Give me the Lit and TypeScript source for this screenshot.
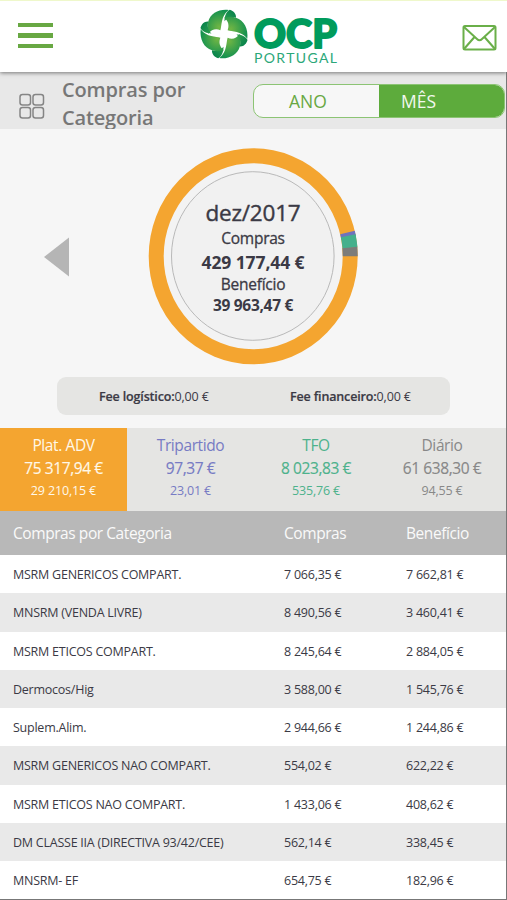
import { LitElement, html, css, svg } from "lit";
import { customElement } from "lit/decorators.js";

type Row = [string, string, string];

const ROWS: Row[] = [
  ["MSRM GENERICOS COMPART.", "7 066,35 €", "7 662,81 €"],
  ["MNSRM (VENDA LIVRE)", "8 490,56 €", "3 460,41 €"],
  ["MSRM ETICOS COMPART.", "8 245,64 €", "2 884,05 €"],
  ["Dermocos/Hig", "3 588,00 €", "1 545,76 €"],
  ["Suplem.Alim.", "2 944,66 €", "1 244,86 €"],
  ["MSRM GENERICOS NAO COMPART.", "554,02 €", "622,22 €"],
  ["MSRM ETICOS NAO COMPART.", "1 433,06 €", "408,62 €"],
  ["DM CLASSE IIA (DIRECTIVA 93/42/CEE)", "562,14 €", "338,45 €"],
  ["MNSRM- EF", "654,75 €", "182,96 €"],
];

const TABS = [
  { name: "Plat. ADV", total: "75 317,94 €", benefit: "29 210,15 €", cls: "adv" },
  { name: "Tripartido", total: "97,37 €", benefit: "23,01 €", cls: "tri" },
  { name: "TFO", total: "8 023,83 €", benefit: "535,76 €", cls: "tfo" },
  { name: "Diário", total: "61 638,30 €", benefit: "94,55 €", cls: "dia" },
];

const petal = (angle: number) => svg`
  <g transform="rotate(${angle})">
    <path d="M.5 -13C.5 -18 2.500 -23 6 -24.500C10 -23.500 13 -20 12.500 -16.500C8 -17.500 4 -17 .5 -13Z" fill="url(#dark)" />
    <path d="M-3.800 -3.800C-2.200 -8 -3.500 -18 4.800 -24.300C-5 -25.500 -14 -21 -16.500 -12.500C-17.600 -9 -17.600 -5 -16.300 0C-13 -5 -8 -5.500 -3.800 -3.800Z" fill="url(#leaf)" />
  </g>`;

@customElement("app-root")
export class AppRoot extends LitElement {
  static styles = css`
    :host { display: block; width: 507px; height: 900px; overflow: hidden; box-sizing: border-box;
      font-family: "Open Sans", "Noto Sans", sans-serif; background: #f6f6f6; color: #3b3a45; }
    * { box-sizing: border-box; }
    .screen { display: flex; flex-direction: column; height: 900px; }
    .top { height: 72px; flex: none; background: #fff; border-top: 1px solid #eff8cb; display: grid;
      grid-template-columns: 54px 1fr 44px; padding: 0 9px 0 18px; position: relative; box-shadow: 0 1px 4px #777; }
    .menu { display: flex; flex-direction: column; gap: 6px; padding-top: 22px; }
    .menu i { height: 4.4px; width: 35px; background: #68a843; }
    .brand { display: flex; padding-left: 127px; }
    .mark { width: 50px; height: 52px; margin-top: 7px; flex: none; }
    .word { width: 90px; height: 64px; margin: 7px 0 0 4px; flex: none; overflow: visible; }
    .mail { width: 36px; height: 28px; margin: 23px 0 0 8px; }
    .body { flex: 1; display: flex; flex-direction: column; border-right: 1px solid #777; border-bottom: 1px solid #777; }
    .bar { height: 57px; flex: none; background: #e8e8e8; display: flex; overflow: hidden; }
    .grid { width: 26px; height: 26px; margin: 21px 0 0 19px; flex: none; }
    h1 { margin: 4px 0 0 17px; font-size: 20px; line-height: 28px; font-weight: 600; color: #777; width: 191px; flex: none; letter-spacing: -.15px; }
    .toggle { margin-top: 12px; width: 252px; height: 34px; border: 1px solid #8cc474; border-radius: 10px; overflow: hidden;
      display: flex; flex: none; background: #f7f7f7; font-size: 17.5px; line-height: 33px; color: #68a843; }
    .ano { width: 125px; padding-left: 35px; }
    .mes { flex: 1; padding-left: 22px; background: #5dab3c; color: #f1f8ee; }
    .chart { height: 248px; flex: none; display: flex; }
    .prev { width: 26px; height: 40px; margin: 108px 0 0 44px; }
    .donut { width: 210px; height: 218px; margin: 18px 0 0 78px; display: grid; }
    .donut svg, .info { grid-area: 1 / 1; width: 210px; height: 218px; }
    .info { display: flex; flex-direction: column; align-items: center; padding-top: 51px; }
    .month { font-size: 22.5px; line-height: 30px; -webkit-text-stroke: .4px; letter-spacing: -.2px; }
    .label { font-size: 15.5px; line-height: 21.5px; -webkit-text-stroke: .3px; letter-spacing: -.25px; }
    .big { font-size: 17.5px; line-height: 24px; font-weight: 700; letter-spacing: -.1px; }
    .small { font-size: 15.5px; line-height: 20px; font-weight: 700; letter-spacing: -.3px; }
    .fees { width: 393px; height: 38px; margin-left: 57px; flex: none; border-radius: 9px; background: #e5e5e3;
      display: flex; font-size: 12.5px; line-height: 39px; letter-spacing: -.15px; }
    .fee { padding-left: 42px; width: 191px; white-space: nowrap; }
    .fee b { font-weight: 600; -webkit-text-stroke: .2px; }
    .tabs { height: 83px; margin-top: 13px; flex: none; display: grid; grid-template-columns: 127px 127px 124px 1fr; background: #e5e5e3; text-align: center; }
    .tab { padding-top: 6px; }
    .adv { background: #f4a530; color: #fff8e8; }
    .tri { color: #777bc4; }
    .tfo { color: #4db28c; }
    .dia { color: #888; }
    .name { font-size: 15.5px; line-height: 23px; letter-spacing: -.4px; }
    .total { font-size: 15.5px; line-height: 23px; letter-spacing: -.4px; -webkit-text-stroke: .15px; }
    .benefit { font-size: 12.5px; line-height: 21px; letter-spacing: -.15px; }
    .row { display: grid; grid-template-columns: 271px 122px 1fr; padding-left: 13px; height: 38.25px; line-height: 39px;
      font-size: 12.5px; letter-spacing: -.24px; background: #fff; flex: none; white-space: nowrap; }
    .row:nth-child(even) { background: #e9e9e9; }
    .head { height: 44px; background: #b8b8b8; color: #fafafa; font-size: 15.5px; line-height: 45px; letter-spacing: -.43px; }
  `;

  render() {
    return html`
      <div class="screen">
        <div class="top">
          <div class="menu"><i></i><i></i><i></i></div>
          <div class="brand">
            <svg class="mark" viewBox="-25 -26 50 52">
              <defs>
                <radialGradient id="leaf" gradientUnits="userSpaceOnUse" cx="-5" cy="-7" r="17">
                  <stop offset="0" stop-color="#72b644" /><stop offset="1" stop-color="#15924f" />
                </radialGradient>
                <linearGradient id="dark" x1="0" y1="1" x2="1" y2="0">
                  <stop offset="0" stop-color="#2f9f50" /><stop offset="1" stop-color="#007d4a" />
                </linearGradient>
              </defs>
              <g transform="scale(.96 .99)">${[0, 90, 180, 270].map(petal)}</g>
            </svg>
            <svg class="word" viewBox="0 0 90 64">
              <text x="1" y="40" textLength="83" lengthAdjust="spacingAndGlyphs" font-family="Lato" font-weight="900" font-size="39" fill="#009b5c" stroke="#009b5c" stroke-width="1.800" stroke-linejoin="round">OCP</text>
              <text x="1" y="55.300" textLength="83" font-family="Lato" font-size="14" fill="#2ba779">PORTUGAL</text>
            </svg>
          </div>
          <svg class="mail" viewBox="0 0 36 28" fill="none" stroke="#6aaf49" stroke-width="2" stroke-linejoin="round">
            <rect x="1.500" y="2" width="32" height="23.500" rx="1.500" /><path d="M2 3L15 15Q17.500 17.500 20 15L33 3M2 25L12.500 13M33 25L22.500 13" />
          </svg>
        </div>
        <div class="body">
          <div class="bar">
            <svg class="grid" viewBox="0 0 26 26" fill="none" stroke="#858585" stroke-width="1.500">
              <rect x="1" y="1.500" width="10.500" height="10.500" rx="2.500" /><rect x="14" y="1.500" width="10.500" height="10.500" rx="2.500" />
              <rect x="1" y="14.500" width="10.500" height="10.500" rx="2.500" /><rect x="14" y="14.500" width="10.500" height="10.500" rx="2.500" />
            </svg>
            <h1>Compras por<br />Categoria</h1>
            <div class="toggle"><div class="ano">ANO</div><div class="mes">MÊS</div></div>
          </div>
          <div class="chart">
            <svg class="prev" viewBox="0 0 26 40"><path d="M0 20L25 .5V39.500Z" fill="#b5b5b5" /></svg>
            <div class="donut">
              <svg viewBox="0 0 210 218">
                <ellipse cx="105.200" cy="109.300" rx="97" ry="100.500" fill="#f3f3f3" stroke="#f4a530" stroke-width="15" />
                <g fill="none" stroke-width="15">
                  <path d="M199.500 85.500A97 100.500 0 0 1 200.700 91" stroke="#6f72bd" />
                  <path d="M200.200 88.800A97 100.500 0 0 1 202 101" stroke="#45b08c" />
                  <path d="M201.800 100.500A97 100.500 0 0 1 202.200 109.300" stroke="#7c7c7a" />
                </g>
                <ellipse cx="104.800" cy="109" rx="81.300" ry="84.300" fill="#f1f1f1" stroke="#b9b9b9" />
              </svg>
              <div class="info">
                <div class="month">dez/2017</div><div class="label">Compras</div><div class="big">429 177,44 €</div>
                <div class="label">Benefício</div><div class="small">39 963,47 €</div>
              </div>
            </div>
          </div>
          <div class="fees">
            <div class="fee"><b>Fee logístico:</b>0,00 €</div>
            <div class="fee"><b>Fee financeiro:</b>0,00 €</div>
          </div>
          <div class="tabs">
            ${TABS.map((t) => html`<div class="tab ${t.cls}"><div class="name">${t.name}</div><div class="total">${t.total}</div><div class="benefit">${t.benefit}</div></div>`)}
          </div>
          <div class="row head"><span>Compras por Categoria</span><span>Compras</span><span>Benefício</span></div>
          <div class="table">
            ${ROWS.map((r) => html`<div class="row">${r.map((c) => html`<span>${c}</span>`)}</div>`)}
          </div>
        </div>
      </div>
    `;
  }
}
